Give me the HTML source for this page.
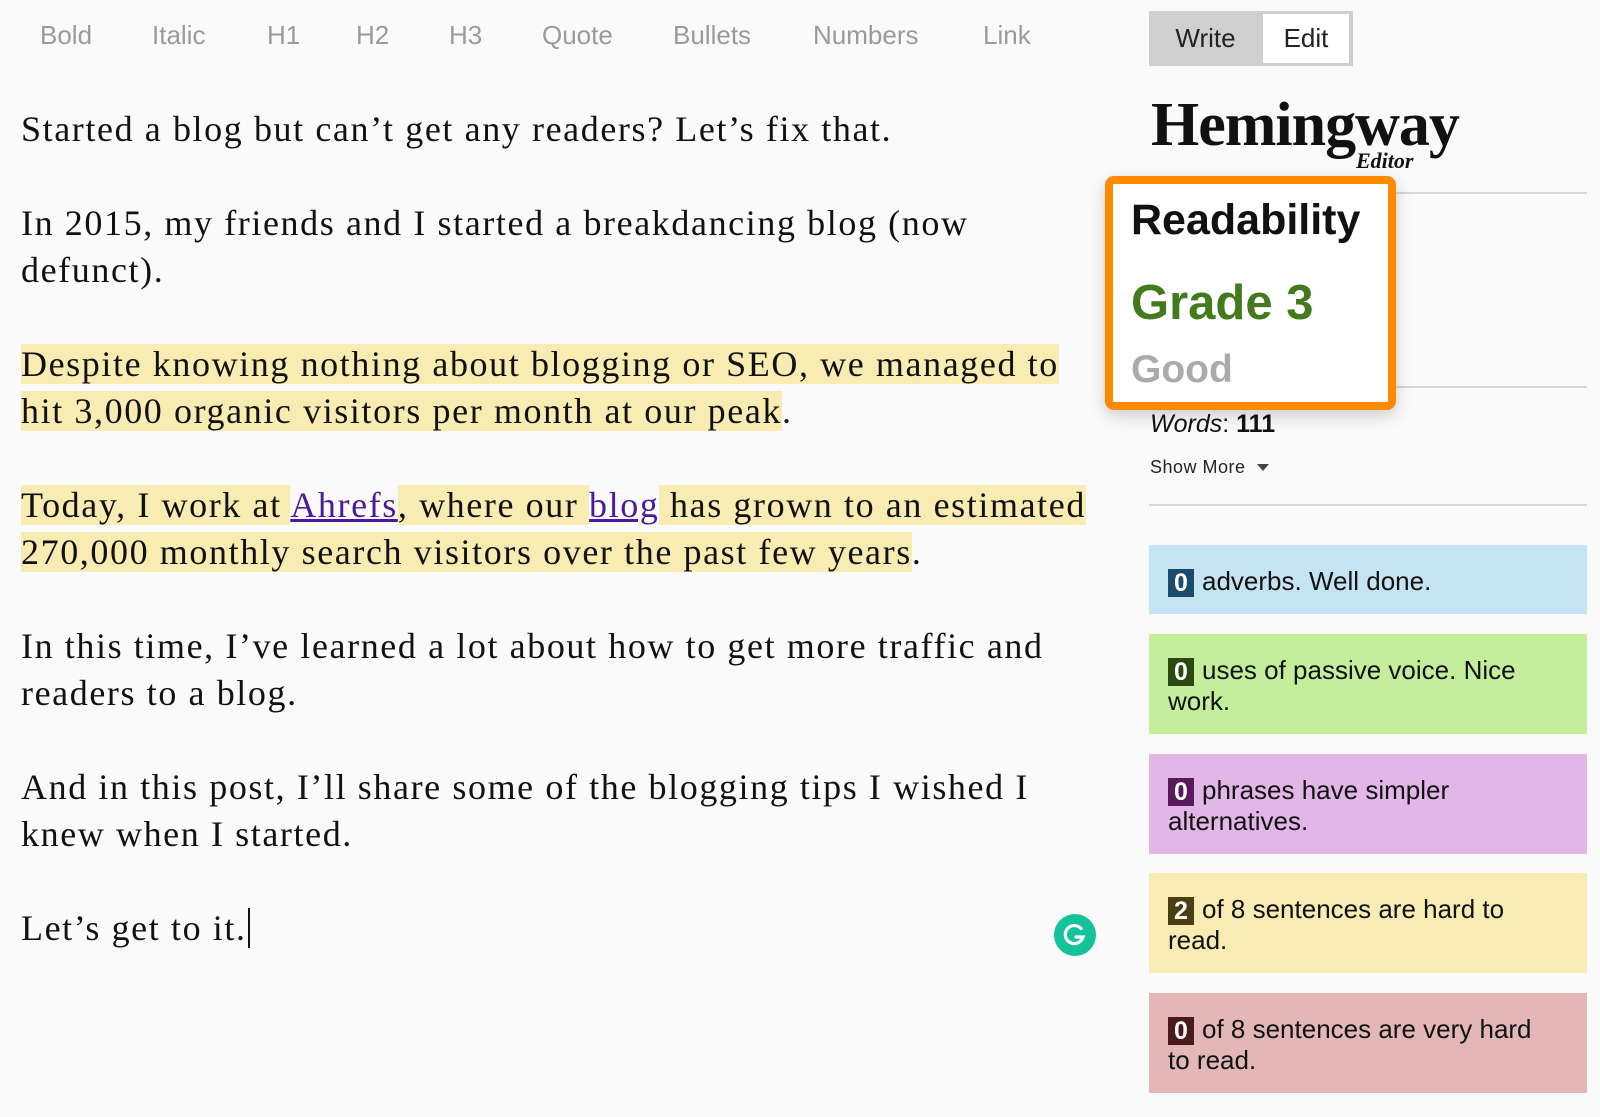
<!DOCTYPE html>
<html><head><meta charset="utf-8">
<style>
*{margin:0;padding:0;box-sizing:border-box}
body{width:1600px;height:1117px;background:#fafafa;position:relative;overflow:hidden;font-family:"Liberation Sans",sans-serif}
.tb{position:absolute;top:20px;font-size:26px;color:#9a9a9a}
.txt{position:absolute;left:21px;top:106px;width:1110px;font-family:"Liberation Serif",serif;font-size:36px;letter-spacing:1.6px;line-height:47px;color:#111}
.txt p{margin-bottom:47px;white-space:nowrap}
.hl{background:#f8ecb2}
a{color:#4b1a9e;text-decoration:underline}
.btns{position:absolute;left:1149px;top:11px;width:204px;height:55px;background:#cfcfcf}
.btns div{position:absolute;top:3px;height:49px;line-height:49px;font-size:26px;color:#222}
.hr{position:absolute;left:1149px;width:438px;height:2px;background:#d6d6d6}
.logo{position:absolute;left:1151px;top:90px;font-family:"Liberation Serif",serif;font-weight:bold;font-size:62px;color:#111;letter-spacing:-1px}
.ed{position:absolute;left:1356px;top:148px;font-family:"Liberation Serif",serif;font-weight:bold;font-style:italic;font-size:22px;color:#111}
.pop{position:absolute;left:1105px;top:176px;width:291px;height:234px;border:8px solid #ff8a00;border-radius:9px;background:#fff;box-shadow:0 6px 16px rgba(0,0,0,.18)}
.pop div{position:absolute;left:18px;font-weight:bold}
.box{position:absolute;left:1149px;width:438px;padding:21px 40px 0 19px;font-size:26px;line-height:30px;color:#111}
.bd{display:inline-block;width:26px;height:28px;line-height:28px;text-align:center;color:#fff;font-weight:bold;font-size:25px;margin-right:8px;vertical-align:-1px}
</style></head><body>
<div class="tb" style="left:40px">Bold</div>
<div class="tb" style="left:152px">Italic</div>
<div class="tb" style="left:267px">H1</div>
<div class="tb" style="left:356px">H2</div>
<div class="tb" style="left:449px">H3</div>
<div class="tb" style="left:542px">Quote</div>
<div class="tb" style="left:673px">Bullets</div>
<div class="tb" style="left:813px">Numbers</div>
<div class="tb" style="left:983px">Link</div>

<div class="txt">
<p>Started a blog but can’t get any readers? Let’s fix that.</p>
<p>In 2015, my friends and I started a breakdancing blog (now<br>defunct).</p>
<p><span class="hl">Despite knowing nothing about blogging or SEO, we managed to </span><br><span class="hl">hit 3,000 organic visitors per month at our peak</span>.</p>
<p><span class="hl">Today, I work at </span><a>Ahrefs</a><span class="hl">, where our </span><a>blog</a><span class="hl"> has grown to an estimated </span><br><span class="hl">270,000 monthly search visitors over the past few years</span>.</p>
<p>In this time, I’ve learned a lot about how to get more traffic and<br>readers to a blog.</p>
<p>And in this post, I’ll share some of the blogging tips I wished I<br>knew when I started.</p>
<p>Let’s get to it.<span style="border-left:2px solid #111;margin-left:1px"></span></p>
</div>

<svg style="position:absolute;left:1054px;top:914px" width="42" height="42" viewBox="0 0 42 42"><circle cx="21" cy="21" r="21" fill="#15c39a"/><path d="M27 14.5A9 9 0 1 0 29 23H22" fill="none" stroke="#fff" stroke-width="3.2" stroke-linecap="round"/></svg>

<div class="btns"><div style="left:0;width:113px;text-align:center">Write</div><div style="left:114px;width:86px;background:#fff;text-align:center">Edit</div></div>
<div class="logo">Hemingway</div>
<div class="ed">Editor</div>
<div class="hr" style="top:192px"></div>
<div class="hr" style="top:386px"></div>
<div class="hr" style="top:504px"></div>

<div class="pop">
<div style="top:12px;font-size:43px;color:#111">Readability</div>
<div style="top:91px;font-size:49px;color:#427a1c">Grade 3</div>
<div style="top:164px;font-size:39px;color:#aaa">Good</div>
</div>

<div style="position:absolute;left:1150px;top:410px;font-size:25px;color:#111"><i>Words</i>: <b>111</b></div>
<div style="position:absolute;left:1150px;top:457px;font-size:18px;color:#222;letter-spacing:.5px">Show More <span style="display:inline-block;border:6px solid transparent;border-top:7px solid #444;vertical-align:-4px;margin-left:6px"></span></div>

<div class="box" style="top:545px;height:69px;background:#c4e3f3"><span class="bd" style="background:#1b4a6b">0</span>adverbs. Well done.</div>
<div class="box" style="top:634px;height:100px;background:#c4ee9c"><span class="bd" style="background:#2b4a10">0</span>uses of passive voice. Nice work.</div>
<div class="box" style="top:754px;height:100px;background:#e3b6e8"><span class="bd" style="background:#581a5c">0</span>phrases have simpler alternatives.</div>
<div class="box" style="top:873px;height:100px;background:#f8ecb4"><span class="bd" style="background:#493f12">2</span>of 8 sentences are hard to read.</div>
<div class="box" style="top:993px;height:100px;background:#e3b7b7"><span class="bd" style="background:#4a1a1a">0</span>of 8 sentences are very hard to read.</div>
</body></html>
